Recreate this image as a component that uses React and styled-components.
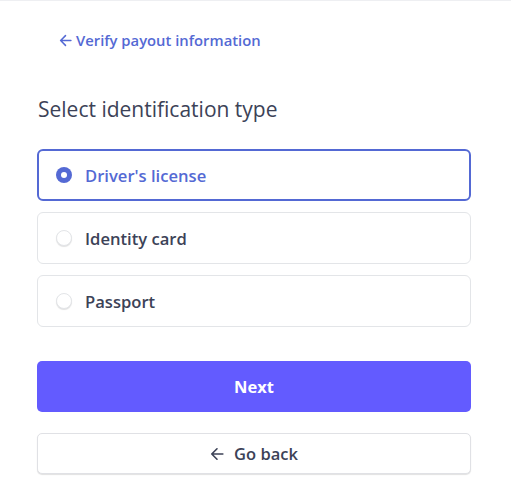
import React, { useState } from "react";
import styled, { createGlobalStyle } from "styled-components";

const GlobalStyle = createGlobalStyle`
  body {
    margin: 0;
    background: #fff;
    font-family: "Open Sans", "Noto Sans", sans-serif;
  }
`;

const options = ["Driver's license", "Identity card", "Passport"];

const ArrowLeft = ({ size = 12 }) => (
  <svg width={size} height={size} viewBox="0 0 12 12" fill="none">
    <path
      d="M11 6H1.5M6 1.5L1.5 6L6 10.5"
      stroke="currentColor"
      strokeWidth="1.4"
      strokeLinecap="round"
      strokeLinejoin="round"
    />
  </svg>
);

function App() {
  const [selected, setSelected] = useState(0);

  return (
    <Page>
      <GlobalStyle />
      <Content>
        <BackLink href="#">
          <ArrowLeft size={13} />
          Verify payout information
        </BackLink>
        <Title>Select identification type</Title>
        <Options>
          {options.map((label, i) => (
            <Option key={label} $active={selected === i} onClick={() => setSelected(i)}>
              <Radio $active={selected === i} />
              {label}
            </Option>
          ))}
        </Options>
        <Actions>
          <PrimaryButton>Next</PrimaryButton>
          <SecondaryButton>
            <ArrowLeft size={14} />
            Go back
          </SecondaryButton>
        </Actions>
      </Content>
    </Page>
  );
}

const Page = styled.div`
  min-height: 497px;
  border-top: 1px solid #eeeff2;
  box-sizing: border-box;
`;

const Content = styled.div`
  width: 434px;
  margin-left: 37px;
  padding-top: 28px;
  display: flex;
  flex-direction: column;
`;

const BackLink = styled.a`
  align-self: flex-start;
  margin-left: 22px;
  display: flex;
  align-items: center;
  gap: 4px;
  color: #5469d4;
  font-size: 14.8px;
  font-weight: 600;
  text-decoration: none;
  line-height: 22px;
`;

const Title = styled.h2`
  margin: 43px 0 0 1px;
  font-size: 21px;
  font-weight: 400;
  color: #3c4257;
  line-height: 30px;
`;

const Options = styled.div`
  margin-top: 25px;
  display: flex;
  flex-direction: column;
  gap: 11px;
`;

const Option = styled.div`
  height: 52px;
  box-sizing: border-box;
  display: flex;
  align-items: center;
  gap: 13px;
  padding-left: ${(p) => (p.$active ? "17px" : "18px")};
  border: ${(p) => (p.$active ? "2px solid #5469d4" : "1px solid #e3e5e8")};
  border-radius: 6px;
  font-size: 16.6px;
  font-weight: 600;
  color: ${(p) => (p.$active ? "#5469d4" : "#3c4257")};
  cursor: pointer;
`;

const Radio = styled.span`
  width: 16px;
  height: 16px;
  border-radius: 50%;
  box-sizing: border-box;
  flex-shrink: 0;
  background: ${(p) => (p.$active ? "#5469d4" : "#fff")};
  border: ${(p) => (p.$active ? "none" : "1px solid #e3e5e8")};
  box-shadow: ${(p) => (p.$active ? "none" : "0 1px 1px rgba(0,0,0,0.12)")};
  position: relative;
  &::after {
    content: "";
    display: ${(p) => (p.$active ? "block" : "none")};
    position: absolute;
    width: 6px;
    height: 6px;
    border-radius: 50%;
    background: #fff;
    left: 5px;
    top: 5px;
  }
`;

const Actions = styled.div`
  margin-top: 34px;
  display: flex;
  flex-direction: column;
  gap: 21px;
`;

const PrimaryButton = styled.button`
  height: 51px;
  border: none;
  border-radius: 5px;
  background: #635bff;
  color: #fff;
  font-family: inherit;
  font-size: 16.5px;
  font-weight: 700;
`;

const SecondaryButton = styled.button`
  height: 41px;
  display: flex;
  align-items: center;
  justify-content: center;
  gap: 10px;
  border: 1px solid #e0e1e5;
  border-radius: 5px;
  background: #fff;
  box-shadow: 0 1px 1px rgba(0, 0, 0, 0.12);
  color: #3c4257;
  font-family: inherit;
  font-size: 16.5px;
  font-weight: 600;
`;

export default App;
